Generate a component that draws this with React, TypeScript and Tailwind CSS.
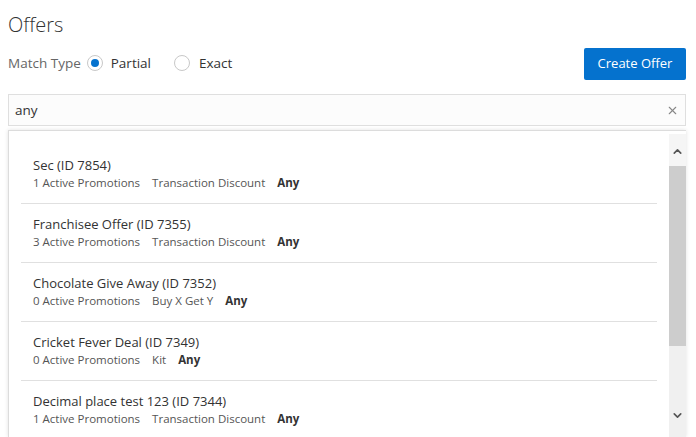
import { ChevronUp, ChevronDown, X } from 'lucide-react';

const offers = [
  { name: 'Sec', id: 7854, active: 1, type: 'Transaction Discount' },
  { name: 'Franchisee Offer', id: 7355, active: 3, type: 'Transaction Discount' },
  { name: 'Chocolate Give Away', id: 7352, active: 0, type: 'Buy X Get Y' },
  { name: 'Cricket Fever Deal', id: 7349, active: 0, type: 'Kit' },
  { name: 'Decimal place test 123', id: 7344, active: 1, type: 'Transaction Discount' },
];

export default function App() {
  return (
    <div
      className="w-[696px] h-[437px] overflow-hidden bg-white text-[#333]"
      style={{ fontFamily: '"Open Sans", "Segoe UI", sans-serif' }}
    >
      <div className="pl-2 pr-[10px] pt-[12px]">
        <h1 className="text-[20px] leading-[26px] font-light text-[#333]">Offers</h1>

        <div className="flex items-end justify-between mt-[10px]">
          <div className="flex items-center h-[22px] mb-[6px] text-[13.5px]">
            <span className="text-[#666] mr-[6px]">Match Type</span>
            <span className="w-4 h-4 rounded-full border border-[#c8c8c8] bg-white flex items-center justify-center">
              <span className="w-[8px] h-[8px] rounded-full bg-[#0572ce]" />
            </span>
            <span className="ml-[8px] text-[#333]">Partial</span>
            <span className="ml-[23px] w-4 h-4 rounded-full border border-[#c8c8c8] bg-white" />
            <span className="ml-[9px] text-[#333]">Exact</span>
          </div>
          <button className="w-[102px] h-[32px] bg-[#0572ce] text-white text-[13px] rounded-[2px]">
            Create Offer
          </button>
        </div>

        <div className="mt-[14px] h-[32px] border border-[#dfdfdf] bg-[#fcfcfc] flex items-center pl-[6px] pr-[6px] text-[13.5px]">
          <span className="flex-1 pt-[1px]">any</span>
          <X className="w-[13px] h-[13px] text-[#888]" strokeWidth={2} />
        </div>

        <div className="mt-[4px] h-[307px] border-l border-t border-[#dcdcdc] shadow-[0_0_4px_rgba(0,0,0,0.12)] flex">
          <div className="flex-1 pt-[14px] pl-[12px] pr-[12px]">
            {offers.map((o, i) => (
              <div
                key={o.id}
                className={`px-[12px] pt-[11px] pb-[11px] ${i < offers.length - 1 ? 'border-b border-[#e0e0e0]' : ''}`}
              >
                <div className="text-[13px] leading-[18px] text-[#333]">
                  {o.name} (ID {o.id})
                </div>
                <div className="text-[11.5px] leading-[18px] text-[#555] flex gap-[12px]">
                  <span>{o.active} Active Promotions</span>
                  <span>{o.type}</span>
                  <span className="font-bold text-[#333]">Any</span>
                </div>
              </div>
            ))}
          </div>
          <div className="w-[17px] mt-[3px] bg-[#f0f0f0] flex flex-col">
            <div className="h-[32px] flex items-center justify-center bg-[#f5f5f5] pt-[3px]">
              <ChevronUp className="w-[13px] h-[13px] text-[#555]" strokeWidth={3} />
            </div>
            <div className="h-[180px] bg-[#cdcdcd]" />
            <div className="flex-1" />
            <div className="h-[32px] flex items-start pt-[4px] justify-center">
              <ChevronDown className="w-[13px] h-[13px] text-[#555]" strokeWidth={3} />
            </div>
          </div>
        </div>
      </div>
    </div>
  );
}
